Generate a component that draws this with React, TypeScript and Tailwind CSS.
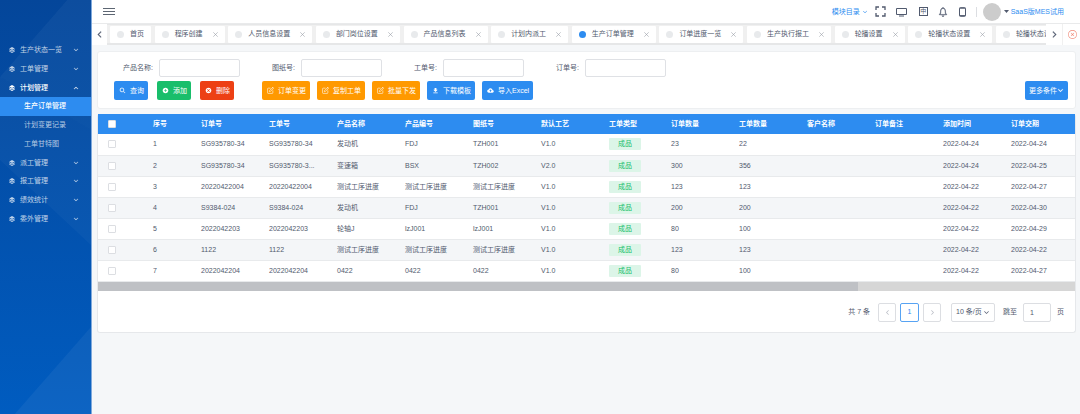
import React from 'react';
import {
  IoIosArrowDown,
  IoIosArrowUp,
  IoIosArrowBack,
  IoIosArrowForward,
  IoIosCloseCircleOutline,
  IoIosNotificationsOutline,
  IoIosSearch,
  IoMdAddCircle,
  IoMdCloseCircle,
  IoMdCloudUpload,
  IoMdDownload,
} from 'react-icons/io';
import { FiEdit } from 'react-icons/fi';

interface MenuItem {
  label: string;
  level: 1 | 2;
  open?: boolean;
  active?: boolean;
}

const menu: MenuItem[] = [
  { label: '生产状态一览', level: 1 },
  { label: '工单管理', level: 1 },
  { label: '计划管理', level: 1, open: true },
  { label: '生产订单管理', level: 2, active: true },
  { label: '计划变更记录', level: 2 },
  { label: '工单甘特图', level: 2 },
  { label: '派工管理', level: 1 },
  { label: '报工管理', level: 1 },
  { label: '绩效统计', level: 1 },
  { label: '委外管理', level: 1 },
];

const tabs = [
  '首页', '程序创建', '人员信息设置', '部门岗位设置', '产品信息列表', '计划内派工',
  '生产订单管理', '订单进度一览', '生产执行报工', '轮播设置', '轮播状态设置', '轮播状态设置',
];

const filters = [
  { id: 'productName', label: '产品名称:' },
  { id: 'drawingNo', label: '图纸号:' },
  { id: 'workNo', label: '工单号:' },
  { id: 'orderNo', label: '订单号:' },
];

const columns = [
  { title: '序号', width: 'w-[48px]' },
  { title: '订单号', width: 'w-[68px]' },
  { title: '工单号', width: 'w-[68px]' },
  { title: '产品名称', width: 'w-[68px]' },
  { title: '产品编号', width: 'w-[68px]' },
  { title: '图纸号', width: 'w-[68px]' },
  { title: '默认工艺', width: 'w-[68px]' },
  { title: '工单类型', width: 'w-[62px]' },
  { title: '订单数量', width: 'w-[68px]' },
  { title: '工单数量', width: 'w-[68px]' },
  { title: '客户名称', width: 'w-[68px]' },
  { title: '订单备注', width: 'w-[68px]' },
  { title: '添加时间', width: 'w-[68px]' },
  { title: '订单交期', width: '' },
];

const rows = [
  ['1', 'SG935780-34', 'SG935780-34', '发动机', 'FDJ', 'TZH001', 'V1.0', '成品', '23', '22', '', '', '2022-04-24', '2022-04-24'],
  ['2', 'SG935780-34', 'SG935780-3...', '变速箱', 'BSX', 'TZH002', 'V2.0', '成品', '300', '356', '', '', '2022-04-24', '2022-04-25'],
  ['3', '20220422004', '20220422004', '测试工序进度', '测试工序进度', '测试工序进度', 'V1.0', '成品', '123', '123', '', '', '2022-04-22', '2022-04-27'],
  ['4', 'S9384-024', 'S9384-024', '发动机', 'FDJ', 'TZH001', 'V1.0', '成品', '200', '200', '', '', '2022-04-22', '2022-04-30'],
  ['5', '2022042203', '2022042203', '轮轴J', 'lzJ001', 'lzJ001', 'V1.0', '成品', '80', '100', '', '', '2022-04-22', '2022-04-29'],
  ['6', '1122', '1122', '测试工序进度', '测试工序进度', '测试工序进度', 'V1.0', '成品', '123', '123', '', '', '2022-04-22', '2022-04-22'],
  ['7', '2022042204', '2022042204', '0422', '0422', '0422', 'V1.0', '成品', '80', '100', '', '', '2022-04-22', '2022-04-27'],
];

const LayersIcon = () => (
  <svg viewBox="0 0 12 12" className="w-[6px] h-[6px] shrink-0" fill="currentColor">
    <path d="M6 0 11.5 3 6 6 0.5 3Z" />
    <path d="M0.5 4.4 6 7.2 11.5 4.4V6.4L6 9.2 0.5 6.4Z" />
    <path d="M0.5 7.4 6 10.1 11.5 7.4V9.2L6 12 0.5 9.2Z" />
  </svg>
);

const Sidebar = () => (
  <aside className="relative w-[92px] shrink-0 overflow-hidden border-r border-[#7fa9dc] bg-linear-to-b from-[#04469a] to-[#005cc0]">
    <svg className="absolute inset-0 w-full h-full" viewBox="0 0 92 414" preserveAspectRatio="none">
      <path d="M68 0H92V130L0 77Z" fill="#fff" fillOpacity="0.01" />
      <path d="M0 77 68 0H92V245L0 160Z" fill="#fff" fillOpacity="0.03" />
      <path d="M92 327V414H15Z" fill="#fff" fillOpacity="0.05" />
    </svg>
    <nav className="relative pt-[41px]">
      <ul className="grid grid-rows-10 h-[187px]">
        {menu.map((item) => (
          <li key={item.label} className="min-h-0">
            {item.level === 1 ? (
              <button
                className={`w-full h-full flex items-center pl-[9px] pr-3 gap-[5px] ${item.open ? 'text-white font-medium' : 'text-white/75'}`}
              >
                <LayersIcon />
                <span className="flex-1 text-left">{item.label}</span>
                {item.open ? (
                  <IoIosArrowUp className="w-[6px] h-[6px]" stroke="currentColor" strokeWidth="20" />
                ) : (
                  <IoIosArrowDown className="w-[6px] h-[6px]" stroke="currentColor" strokeWidth="20" />
                )}
              </button>
            ) : (
              <a
                href="#"
                className={`h-full flex items-center pl-6 ${item.active ? 'bg-[#2d8cf0] text-white font-medium' : 'text-white/70'}`}
              >
                {item.label}
              </a>
            )}
          </li>
        ))}
      </ul>
    </nav>
  </aside>
);

const Header = () => (
  <header className="h-[23px] bg-white flex items-center justify-between pl-[11px] pr-4">
    <button aria-label="折叠菜单" className="text-[#5d6673]">
      <svg viewBox="0 0 12 9" className="w-3 h-[9px]" stroke="currentColor" strokeWidth="1">
        <path d="M0 1.5H12M0 4.5H12M0 7.5H12" />
      </svg>
    </button>
    <div className="flex items-center text-[#515a6e]">
      <a href="#" className="flex items-center gap-[2px] text-[#2d8cf0]">
        模块目录 <IoIosArrowDown className="w-[6px] h-[6px]" />
      </a>
      <button aria-label="全屏" className="ml-[7px]">
        <svg viewBox="0 0 11 11" className="w-[11px] h-[11px]" fill="none" stroke="currentColor" strokeWidth="1.3">
          <path d="M1 4V1H4M7 1H10V4M10 7V10H7M4 10H1V7" />
        </svg>
      </button>
      <button aria-label="大屏" className="ml-[10px]">
        <svg viewBox="0 0 11 10" className="w-[11px] h-[10px]" fill="none" stroke="currentColor">
          <path d="M0.5 1.5H10.5V7.5H0.5Z" />
          <path d="M3 9H8" />
        </svg>
      </button>
      <button aria-label="语言" className="ml-3 w-[9px] h-[9px] border border-[#515a6e] flex items-center justify-center">
        <span className="text-[6px] leading-[7px]">中</span>
      </button>
      <button aria-label="消息" className="ml-[9px]">
        <IoIosNotificationsOutline className="w-[12px] h-[12px]" stroke="currentColor" strokeWidth="14" />
      </button>
      <button aria-label="手机端" className="ml-[10px]">
        <svg viewBox="0 0 7 10" className="w-[7px] h-[10px]" fill="none" stroke="currentColor">
          <rect x="0.5" y="0.7" width="6" height="8.6" rx="0.8" />
          <path d="M0.5 1.2H6.5M0.5 8.6H6.5" />
        </svg>
      </button>
      <span className="ml-[10px] w-px h-[10px] bg-[#dcdee2]" />
      <span className="ml-[6px] w-[18px] h-[18px] rounded-full bg-[#cccccc]" />
      <a href="#" className="flex items-center ml-[3px] gap-[2px] text-[#2d8cf0]">
        <svg viewBox="0 0 5 3" className="w-[5px] h-[3px]" fill="#515a6e">
          <path d="M0 0H5L2.5 3Z" />
        </svg>
        SaaS版MES试用
      </a>
    </div>
  </header>
);

const TabBar = () => (
  <div className="h-[22px] flex bg-white border-t border-[#e9eaeb]">
    <button aria-label="向左" className="w-[15px] shrink-0 flex items-center justify-center">
      <IoIosArrowBack className="w-[9px] h-[9px]" stroke="currentColor" strokeWidth="20" />
    </button>
    <div className="flex-1 min-w-0 overflow-hidden pl-[3px] flex items-center bg-[#f0f0f0] border-t border-b-2 border-[#e6e7e8]">
      <ul className="w-[970px] shrink-0 flex justify-between">
        {tabs.map((tab, i) => (
          <li key={i} className="h-[17px] bg-white rounded-[1px] flex items-center px-[7px] whitespace-nowrap">
            <span className={`w-[7px] h-[7px] rounded-full mr-[6px] ${i === 6 ? 'bg-[#2d8cf0]' : 'bg-[#e8eaec]'}`} />
            <a href="#">{tab}</a>
            {i > 0 && (
              <button aria-label={`关闭${tab}`} className="ml-[10px] text-[#9a9fa8]">
                <svg viewBox="0 0 5 5" className="w-[5px] h-[5px]" stroke="currentColor" strokeWidth="0.6">
                  <path d="M0.3 0.3 4.7 4.7M4.7 0.3 0.3 4.7" />
                </svg>
              </button>
            )}
          </li>
        ))}
      </ul>
    </div>
    <button aria-label="向右" className="w-4 shrink-0 flex items-center justify-center">
      <IoIosArrowForward className="w-[9px] h-[9px]" stroke="currentColor" strokeWidth="20" />
    </button>
    <button aria-label="全部关闭" className="w-[18px] shrink-0 border-l border-[#f0f0f0] flex items-center justify-center pl-[2px] text-[#f08a78]">
      <IoIosCloseCircleOutline className="w-[11px] h-[11px]" />
    </button>
  </div>
);

interface ToolButtonProps {
  icon: React.ReactNode;
  color: string;
  children: React.ReactNode;
}

const ToolButton: React.FC<ToolButtonProps> = ({ icon, color, children }) => (
  <button className={`h-[19px] pl-[5px] pr-1 rounded-[2px] flex items-center gap-1 text-white whitespace-nowrap ${color}`}>
    {icon}
    {children}
  </button>
);

const iconSize = 'w-[7px] h-[7px]';

const SearchPanel = () => (
  <section className="bg-white rounded-[3px] border border-[#edeff1] pt-[7px] pb-2">
    <form className="flex">
      {filters.map((f) => (
        <div key={f.id} className="flex items-center">
          <label htmlFor={f.id} className="w-[61px] pr-[6px] text-right">{f.label}</label>
          <input id={f.id} type="text" className="w-[81px] h-[18px] px-1 rounded-[2px] border border-[#dfe1e5] outline-none" />
        </div>
      ))}
    </form>
    <div className="flex justify-between pt-1 pl-4 pr-[7px]">
      <div className="flex gap-[9px]">
        <ToolButton color="bg-[#2d8cf0]" icon={<IoIosSearch className={iconSize} stroke="currentColor" strokeWidth="20" />}>查询</ToolButton>
        <ToolButton color="bg-[#19be6b]" icon={<IoMdAddCircle className={iconSize} />}>添加</ToolButton>
        <ToolButton color="bg-[#ed4014]" icon={<IoMdCloseCircle className={iconSize} />}>删除</ToolButton>
        <div className="flex gap-[7px] pl-[19px]">
          <ToolButton color="bg-[#ff9900]" icon={<FiEdit className={iconSize} />}>订单变更</ToolButton>
          <ToolButton color="bg-[#ff9900]" icon={<FiEdit className={iconSize} />}>复制工单</ToolButton>
          <ToolButton color="bg-[#ff9900]" icon={<FiEdit className={iconSize} />}>批量下发</ToolButton>
          <ToolButton color="bg-[#2d8cf0]" icon={<IoMdDownload className={iconSize} />}>下载模板</ToolButton>
          <ToolButton color="bg-[#2d8cf0]" icon={<IoMdCloudUpload className={iconSize} />}>导入Excel</ToolButton>
        </div>
      </div>
      <button className="h-[19px] px-1 rounded-[2px] bg-[#2d8cf0] text-white flex items-center">
        更多条件<IoIosArrowDown className={iconSize} stroke="currentColor" strokeWidth="20" />
      </button>
    </div>
  </section>
);

const checkboxClass = 'block appearance-none w-2 h-2 rounded-[1px] border border-[#dcdee2] bg-white';

const OrderTable = () => (
  <div className="overflow-hidden">
    <table className="w-full table-fixed border-collapse text-left">
      <thead>
        <tr className="h-5 bg-[#2d8cf0] text-white">
          <th className="w-[49px] p-0 pl-[10px]">
            <input type="checkbox" aria-label="全选" className={checkboxClass} />
          </th>
          {columns.map((c) => (
            <th key={c.title} className={`p-0 pl-[6px] font-bold ${c.width}`}>{c.title}</th>
          ))}
        </tr>
      </thead>
      <tbody>
        {rows.map((row) => (
          <tr key={row[0]} className="h-[21px] border-b border-[#e8eaec] even:bg-[#f4f6f8]">
            <td className="p-0 pl-[10px]">
              <input type="checkbox" aria-label={`选择第${row[0]}行`} className={checkboxClass} />
            </td>
            {row.map((cell, i) => (
              <td key={i} className="p-0 pl-[6px] whitespace-nowrap">
                {i === 7 ? (
                  <span className="block w-8 h-3 leading-3 text-center rounded-[1px] bg-[#dcf5e8] text-[#19be6b]">{cell}</span>
                ) : (
                  cell
                )}
              </td>
            ))}
          </tr>
        ))}
      </tbody>
    </table>
    <div className="h-[9px] bg-[#d6d6d6]">
      <div className="h-full w-7/9 bg-[#bfc1c5]" />
    </div>
  </div>
);

const pagerBox = 'h-[19px] rounded-[2px] border bg-white flex items-center justify-center';

const Pager = () => (
  <div className="flex items-center justify-end pt-3 pb-[10px] pr-[11px]">
    <span className="mr-2">共 7 条</span>
    <div className="flex gap-1">
      <button aria-label="上一页" className={`${pagerBox} w-[18px] border-[#dcdee2] text-[#b5b9c2]`}>
        <IoIosArrowBack className={iconSize} />
      </button>
      <button aria-current="page" className={`${pagerBox} w-[19px] border-[#57a3f3] text-[#2d8cf0]`}>1</button>
      <button aria-label="下一页" className={`${pagerBox} w-[18px] border-[#dcdee2] text-[#b5b9c2]`}>
        <IoIosArrowForward className={iconSize} />
      </button>
    </div>
    <div className="relative ml-[10px]">
      <select aria-label="每页条数" className="appearance-none block w-11 h-[19px] pl-1 rounded-[2px] border border-[#dcdee2] bg-white">
        <option>10 条/页</option>
      </select>
      <IoIosArrowDown className="absolute right-[5px] top-[6px] w-[7px] h-[7px] pointer-events-none" />
    </div>
    <label htmlFor="jump" className="ml-2 mr-[6px]">跳至</label>
    <input id="jump" type="text" defaultValue="1" className="w-7 h-[19px] px-[6px] rounded-[2px] border border-[#dcdee2] outline-none" />
    <span className="ml-[6px]">页</span>
  </div>
);

const App = () => (
  <div
    lang="zh-CN"
    className="min-h-screen flex bg-[#f5f7f9] text-[7px] leading-[10px] text-[#515a6e] font-['Liberation_Sans','Noto_Sans_CJK_SC',sans-serif]"
  >
    <Sidebar />
    <div className="flex-1 min-w-0">
      <Header />
      <TabBar />
      <main className="pt-[6px] pl-[5px] pr-1 flex flex-col gap-[5px]">
        <SearchPanel />
        <section className="bg-white rounded-[3px] border border-t-0 border-[#e6e8eb]">
          <OrderTable />
          <Pager />
        </section>
      </main>
    </div>
  </div>
);

export default App;
